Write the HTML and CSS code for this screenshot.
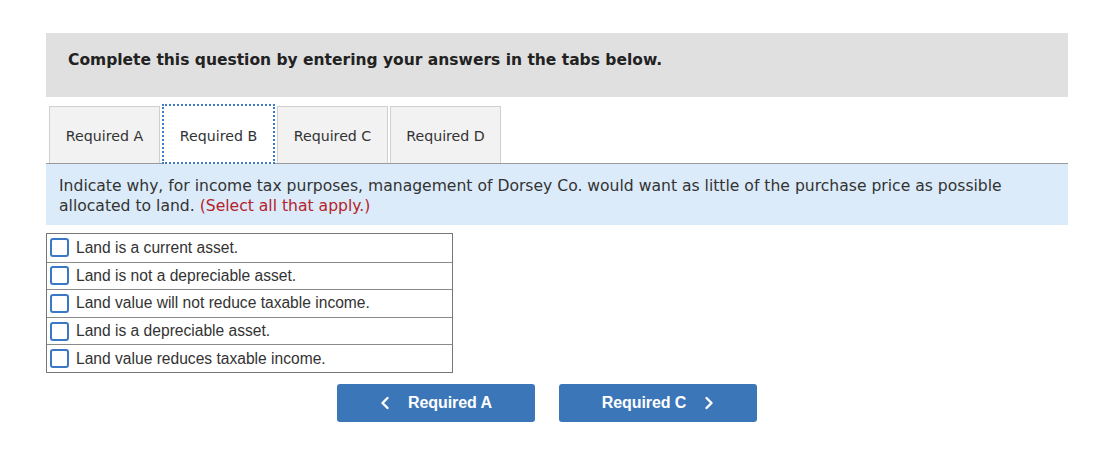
FILE: index.html
```html
<!DOCTYPE html>
<html>
<head>
<meta charset="utf-8">
<link rel="stylesheet" href="styles.css">
</head>
<body>
<div class="wrap">
  <div class="banner">Complete this question by entering your answers in the tabs below.</div>
  <div class="tabs">
    <div class="tab">Required A</div>
    <div class="tab active">Required B</div>
    <div class="tab">Required C</div>
    <div class="tab">Required D</div>
  </div>
  <div class="prompt">Indicate why, for income tax purposes, management of Dorsey Co. would want as little of the purchase price as possible allocated to land. <span class="hint">(Select all that apply.)</span></div>
  <div class="options">
    <div class="opt"><span class="box"></span><span>Land is a current asset.</span></div>
    <div class="opt"><span class="box"></span><span>Land is not a depreciable asset.</span></div>
    <div class="opt"><span class="box"></span><span>Land value will not reduce taxable income.</span></div>
    <div class="opt"><span class="box"></span><span>Land is a depreciable asset.</span></div>
    <div class="opt"><span class="box"></span><span>Land value reduces taxable income.</span></div>
  </div>
  <div class="nav">
    <div class="btn"><svg class="chev" width="10" height="14" viewBox="0 0 10 14"><path d="M7.5 2 L2.5 7 L7.5 12" fill="none" stroke="#fff" stroke-width="2.4" stroke-linecap="round" stroke-linejoin="round"/></svg><span class="lbl-l">Required A</span></div>
    <div class="btn"><span class="lbl-r">Required C</span><svg class="chev" width="10" height="14" viewBox="0 0 10 14"><path d="M2.5 2 L7.5 7 L2.5 12" fill="none" stroke="#fff" stroke-width="2.4" stroke-linecap="round" stroke-linejoin="round"/></svg></div>
  </div>
</div>
</body>
</html>
```
FILE: styles.css
```css
html, body {
  margin: 0;
  padding: 0;
  background: #fff;
}
.wrap {
  margin: 33px 0 0 46px;
  width: 1022px;
  font-family: "DejaVu Sans", Verdana, sans-serif;
}
.banner {
  background: #e0e0e0;
  height: 64px;
  box-sizing: border-box;
  padding: 17px 0 0 22px;
  font-size: 15.5px;
  font-weight: bold;
  color: #222;
  line-height: 20px;
}
.tabs {
  display: flex;
  align-items: flex-end;
  gap: 2px;
  margin-top: 7px;
  padding-left: 3px;
  border-bottom: 1px solid #9a9a9a;
  height: 59px;
}
.tab {
  width: 111px;
  height: 57px;
  box-sizing: border-box;
  border: 1px solid #cfcfcf;
  border-bottom: none;
  background: #f2f2f2;
  display: flex;
  align-items: center;
  justify-content: center;
  font-size: 14.2px;
  color: #333;
  padding-top: 2px;
}
.tab.active {
  width: 113px;
  height: 60px;
  margin-bottom: -1px;
  background: #fff;
  border: 2px dotted #3f7ac4;
  padding-top: 3px;
}
.prompt {
  background: #dbebf9;
  height: 61px;
  box-sizing: border-box;
  padding: 13px 40px 0 13px;
  font-size: 15.6px;
  line-height: 19.5px;
  color: #333;
}
.hint {
  color: #b5222a;
}
.options {
  margin-top: 8px;
  width: 407px;
  box-sizing: border-box;
  border: 1px solid #777;
  font-family: "Liberation Sans", Arial, sans-serif;
  font-size: 15.6px;
  color: #333;
}
.opt {
  display: flex;
  align-items: center;
  gap: 7px;
  height: 27.6px;
  box-sizing: border-box;
  padding-left: 3px;
  border-top: 1px solid #8a8a8a;
}
.opt:first-child {
  border-top: none;
}
.box {
  width: 19px;
  height: 19px;
  box-sizing: border-box;
  border: 2px solid #3a78c3;
  border-radius: 3px;
  background: #fff;
  flex: none;
}
.nav {
  display: flex;
  gap: 24px;
  margin: 11px 0 0 291px;
}
.btn {
  width: 198px;
  height: 38px;
  background: #3b76b9;
  border-radius: 3px;
  display: flex;
  align-items: center;
  justify-content: center;
  color: #fff;
  font-family: "Liberation Sans", Arial, sans-serif;
  font-weight: bold;
  font-size: 16px;
  letter-spacing: -0.1px;
}
.lbl-l { margin-left: 18px; }
.lbl-r { margin-right: 18px; }
.chev { display: block; }
```
